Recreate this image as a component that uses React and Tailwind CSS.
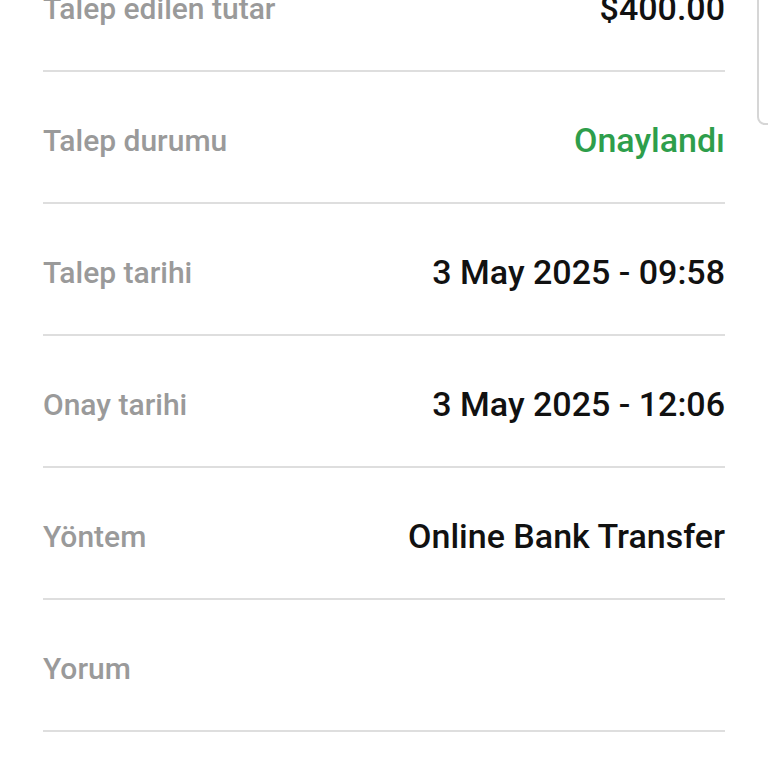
export default function App() {
  const rows = [
    ["Talep edilen tutar", "$400.00", "text-[#111111]"],
    ["Talep durumu", "Onaylandı", "text-[#2e9e4b]"],
    ["Talep tarihi", "3 May 2025 - 09:58", "text-[#111111]"],
    ["Onay tarihi", "3 May 2025 - 12:06", "text-[#111111]"],
    ["Yöntem", "Online Bank Transfer", "text-[#111111]"],
    ["Yorum", "", "text-[#111111]"],
  ];
  return (
    <div className="relative w-[768px] h-[768px] overflow-hidden bg-white" style={{ fontFamily: "Roboto, sans-serif" }}>
      <div className="-mt-[60px] px-[43px]">
        {rows.map(([l, v, c]) => (
          <div key={l} className="h-[132px] flex flex-col">
            <div className="flex-1 flex items-center justify-between pt-[6px]">
              <span className="text-[30px] font-medium text-[#9a9a9a]">{l}</span>
              <span className={`text-[34px] font-medium ${c}`}>{v}</span>
            </div>
            <div className="h-[2px] bg-[#dedede]" />
          </div>
        ))}
      </div>
      <div className="absolute right-[-10px] top-[-10px] w-[21px] h-[135px] border-2 border-[#d6d6d6] rounded-[8px] bg-white" />
    </div>
  );
}
